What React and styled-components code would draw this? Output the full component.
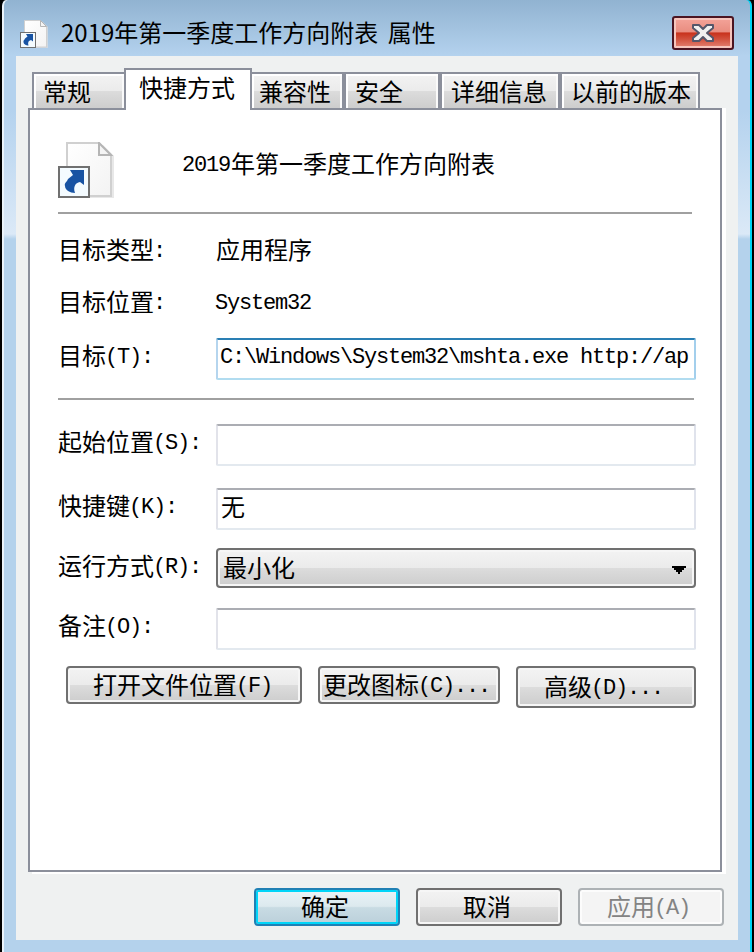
import React from 'react';
import styled, { createGlobalStyle, css } from 'styled-components';

const GlobalStyle = createGlobalStyle`
  * { box-sizing: border-box; }
  body { margin: 0; background: #000; overflow: hidden; }
`;

const edge = '#8b8f9b';
const greyFace = 'linear-gradient(#f3f3f3 0%, #ebebeb 49%, #dcdcdc 51%, #cdcdcd 100%)';

const Frame = styled.div`
  width: 754px;
  height: 952px;
  display: flex;
  flex-direction: column;
  border-left: 2px solid #000;
  border-right: 2px solid #000;
  background: linear-gradient(#91b3d1 0, #b4d2ee 56px, #b4d2ee 110px, #dbe9f7 234px, #b4d2ec 239px, #b4d2ec 100%);
  font-family: 'Noto Sans CJK SC', sans-serif;
  font-size: 24px;
  line-height: 24px;
  color: #000;
  white-space: pre;
  box-shadow: inset 2px 0 #eaf3fa, inset -2px 0 #00d5f8;
  border-radius: 6px 6px 0 0;
`;

const TitleBar = styled.header`
  height: 56px;
  flex: none;
  display: flex;
  align-items: flex-start;
  padding: 16px 18px 0 18px;
`;

const SmallIconBox = styled.div`
  display: flex;
  padding-top: 4px;
  width: 41px;
`;

const Title = styled.h1`
  margin: 3px 0 0;
  flex: 1;
  font-size: 24px;
  font-weight: 400;
  line-height: 26px;
  word-spacing: 4px;
`;

const CloseButton = styled.button`
  width: 62px;
  height: 34px;
  padding: 0;
  display: flex;
  align-items: center;
  justify-content: center;
  border: 2px solid #4b1522;
  border-radius: 3px;
  background: linear-gradient(#f4a49a 0, #e98d80 46%, #c8321c 50%, #d1503c 70%, #e58475 100%);
  box-shadow: inset 0 0 0 2px #f6c5bd;
`;

const Client = styled.main`
  flex: none;
  width: 722px;
  height: 884px;
  margin-left: 14px;
  padding: 12px 12px 0;
  display: flex;
  flex-direction: column;
  background: #eff1f1;
`;

const TabStrip = styled.nav`
  display: flex;
  align-items: flex-end;
  height: 40px;
  padding-left: 4px;
`;

const Tab = styled.div`
  flex: none;
  width: ${p => p.$w}px;
  height: 36px;
  padding: 5px 0 0 ${p => p.$pad}px;
  border: 2px solid ${edge};
  border-bottom: 0;
  background: ${greyFace};
  box-shadow: inset 2px 2px #fff, inset -2px 0 #fafafa;
  ${p => p.$active && css`
    height: 42px;
    margin: 0 0 -2px -2px;
    background: #fff;
    box-shadow: none;
    z-index: 1;
  `}
  ${p => p.$joined && css`border-left: 0;`}
`;

const Panel = styled.section`
  width: 694px;
  height: 764px;
  border: 2px solid ${edge};
  background: #fff;
  box-shadow: 4px 0 #fff, 4px 2px #fff;
  padding: 0 24px 0 28px;
`;

const Heading = styled.div`
  height: 102px;
  padding-top: 32px;
  display: flex;
  gap: 69px;
`;

const FileName = styled.div`
  padding-top: 9px;
`;

const Rule = styled.hr`
  height: 2px;
  border: 0;
  margin: ${p => p.$mt}px ${p => p.$mr}px 0 0;
  background: #a0a0a0;
`;

const Row = styled.div`
  display: grid;
  grid-template-columns: 158px 480px;
  align-items: start;
  margin-top: ${p => p.$mt}px;
`;

const Label = styled.label`
  padding-top: ${p => p.$pt || 0}px;
`;

const Field = styled.div`
  height: 42px;
  padding: 4px 0 0 3px;
  overflow: hidden;
  border: 2px solid;
  border-color: #abadb3 #e0e3ec #e3e9ef #e2e3ea;
  border-radius: 2px;
  background: #fff;
  ${p => p.$focus && css`
    padding-top: 3px;
    border-color: #2a7fb4 #a3cfec #b1dcf0 #b5d5ee;
  `}
`;

const buttonFace = css`
  border: 2px solid #707070;
  border-radius: 4px;
  background: ${greyFace};
  box-shadow: inset 0 0 0 2px #f6f6f6;
`;

const Combo = styled.div`
  ${buttonFace}
  height: 40px;
  padding: 5px 8px 0 5px;
  display: flex;
  justify-content: space-between;
`;

const Arrow = styled.svg`
  margin-top: 11px;
`;

const ButtonRow = styled.div`
  display: flex;
  align-items: flex-start;
  gap: 16px;
  margin: ${p => p.$margin};
`;

const Button = styled.button`
  ${buttonFace}
  flex: none;
  width: ${p => p.$w}px;
  height: ${p => p.$h || 38}px;
  padding: 0 0 2px ${p => p.$pad}px;
  display: flex;
  align-items: center;
  font: inherit;
  line-height: 24px;
  color: #000;
  white-space: pre;
  text-align: left;
  ${p => p.$primary && css`
    border-color: #2080b4;
    box-shadow: inset 0 0 0 2px #00d5f8;
    background: linear-gradient(#eaf4f7 0%, #dce9ee 48%, #c8dbe3 52%, #bbd0da 100%);
  `}
  ${p => p.$disabled && css`
    border-color: #adb2b5;
    box-shadow: inset 0 0 0 2px #fcfcfc;
    background: #f4f4f4;
    color: #838383;
  `}
`;

const Run = styled.span`
  display: block;
  height: 24px;
`;

const Latin = styled.span`
  font-family: 'Liberation Mono', monospace;
  font-size: 22px;
  letter-spacing: -1.2px;
  line-height: 0;
  vertical-align: 2px;
  margin: 0 1px 0 -1px;
`;

/* Half-width runs use a 12px cell, full-width characters a 24px cell. */
const Mixed = ({ children }) => (
  <Run>
    {children.split(/([\x20-\x7e]+)/).filter(Boolean).map((run, i) =>
      /^[\x20-\x7e]/.test(run) ? <Latin key={i}>{run}</Latin> : run
    )}
  </Run>
);

const ShortcutIcon = ({ size }) => (
  <svg width={size} height={size} viewBox="0 0 56 56">
    <defs>
      <linearGradient id="page" x1="0" y1="0" x2="1" y2="1">
        <stop offset="0" stopColor="#fff" />
        <stop offset="1" stopColor="#f3f3f3" />
      </linearGradient>
    </defs>
    <path d="M11 3H45L56 14V56H11Z" fill="#dedede" opacity=".7" />
    <path d="M9 1H41L53 13V54H9Z" fill="url(#page)" stroke="#d0d0d0" strokeWidth="2" />
    <path d="M41 1V13H53Z" fill="#f4f4f4" stroke="#b5b5b5" strokeWidth="2" />
    <rect x="1" y="25" width="30" height="30" fill="#f4fbff" stroke="#707070" strokeWidth="2" />
    <path d="M12 28H26V43L22 40C17 41 15 45 17 51C12 51 7 48 7 44C6 41 9 40 10 37L15 33Z" fill="#1853a3" />
  </svg>
);

const CloseGlyph = () => (
  <svg width="24" height="20" viewBox="0 0 24 20">
    <path d="M2 2H8L12 6L16 2H22V5L16 10L22 15V18H16L12 14L8 18H2V15L8 10L2 5Z"
      fill="#f0f0f0" stroke="#55566a" strokeWidth="2" strokeLinejoin="round" />
  </svg>
);

const tabs = [
  { name: '常规', w: 94, pad: 9 },
  { name: '快捷方式', w: 128, pad: 13, active: true },
  { name: '兼容性', w: 92, pad: 7, joined: true },
  { name: '安全', w: 96, pad: 9 },
  { name: '详细信息', w: 120, pad: 9 },
  { name: '以前的版本', w: 140, pad: 9 },
];

export default function App() {
  return (
    <>
      <GlobalStyle />
      <Frame>
        <TitleBar>
          <SmallIconBox><ShortcutIcon size={28} /></SmallIconBox>
          <Title>2019年第一季度工作方向附表 属性</Title>
          <CloseButton aria-label="关闭"><CloseGlyph /></CloseButton>
        </TitleBar>
        <Client>
          <TabStrip>
            {tabs.map(t => (
              <Tab key={t.name} $w={t.w} $pad={t.pad} $active={t.active} $joined={t.joined}>{t.name}</Tab>
            ))}
          </TabStrip>
          <Panel>
            <Heading>
              <ShortcutIcon size={56} />
              <FileName><Mixed>2019年第一季度工作方向附表</Mixed></FileName>
            </Heading>
            <Rule $mt={0} $mr={4} />
            <Row $mt={23}><Label><Mixed>目标类型:</Mixed></Label><Mixed>应用程序</Mixed></Row>
            <Row $mt={28}><Label><Mixed>目标位置:</Mixed></Label><Mixed>System32</Mixed></Row>
            <Row $mt={25}>
              <Label $pt={5}><Mixed>目标(T):</Mixed></Label>
              <Field $focus><Mixed>{'C:\\Windows\\System32\\mshta.exe http://ap'}</Mixed></Field>
            </Row>
            <Rule $mt={18} $mr={2} />
            <Row $mt={24}><Label $pt={5}><Mixed>起始位置(S):</Mixed></Label><Field /></Row>
            <Row $mt={22}><Label $pt={5}><Mixed>快捷键(K):</Mixed></Label><Field>无</Field></Row>
            <Row $mt={18}>
              <Label $pt={5}><Mixed>运行方式(R):</Mixed></Label>
              <Combo>
                最小化
                <Arrow width="14" height="8" viewBox="0 0 14 8"><path d="M0 0H14V2H12V4H10V6H8V8H6V6H4V4H2V2H0Z" /></Arrow>
              </Combo>
            </Row>
            <Row $mt={20}><Label $pt={5}><Mixed>备注(O):</Mixed></Label><Field /></Row>
            <ButtonRow $margin="16px 0 0 8px">
              <Button $w={236} $pad={25}><Mixed>打开文件位置(F)</Mixed></Button>
              <Button $w={182} $pad={3}><Mixed>更改图标(C)...</Mixed></Button>
              <Button $w={180} $h={42} $pad={26}><Mixed>高级(D)...</Mixed></Button>
            </ButtonRow>
          </Panel>
          <ButtonRow $margin="16px 0 0 226px">
            <Button $w={146} $pad={45} $primary>确定</Button>
            <Button $w={146} $pad={45}>取消</Button>
            <Button $w={146} $pad={27} $disabled><Mixed>应用(A)</Mixed></Button>
          </ButtonRow>
        </Client>
      </Frame>
    </>
  );
}
